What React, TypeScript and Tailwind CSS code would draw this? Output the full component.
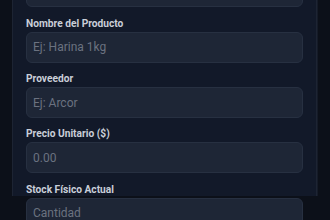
import React from 'react'

const fields = [
  { label: 'Nombre del Producto', placeholder: 'Ej: Harina 1kg' },
  { label: 'Proveedor', placeholder: 'Ej: Arcor' },
  { label: 'Precio Unitario ($)', placeholder: '0.00' },
  { label: 'Stock Físico Actual', placeholder: 'Cantidad' },
]

export default function App() {
  return (
    <div className="h-[220px] overflow-hidden bg-[#0c1019] pl-3 pr-[13px] font-['Roboto',sans-serif]">
      <div className="h-full border-x border-[#1d2433] bg-[#121929] px-[13px] shadow-[1px_0_0_#151b28]">
        <div className="-mt-[23.6px] flex flex-col gap-[9.3px]">
          {/* previous field, scrolled out of view */}
          <div className="h-[31px] rounded-md border border-[#273041] bg-[#1e2636]" />
          {fields.map((f) => (
            <div key={f.label} className="flex flex-col">
              <label className="mb-[1px] text-[10.2px] leading-[14px] font-bold text-[#c9ced8]">{f.label}</label>
              <input
                placeholder={f.placeholder}
                className="h-[31px] w-full rounded-md border border-[#273041] bg-[#1e2636] px-[6px] text-[12px] text-[#d1d5db] outline-none placeholder:text-[#6b7280]"
              />
            </div>
          ))}
        </div>
      </div>
    </div>
  )
}
